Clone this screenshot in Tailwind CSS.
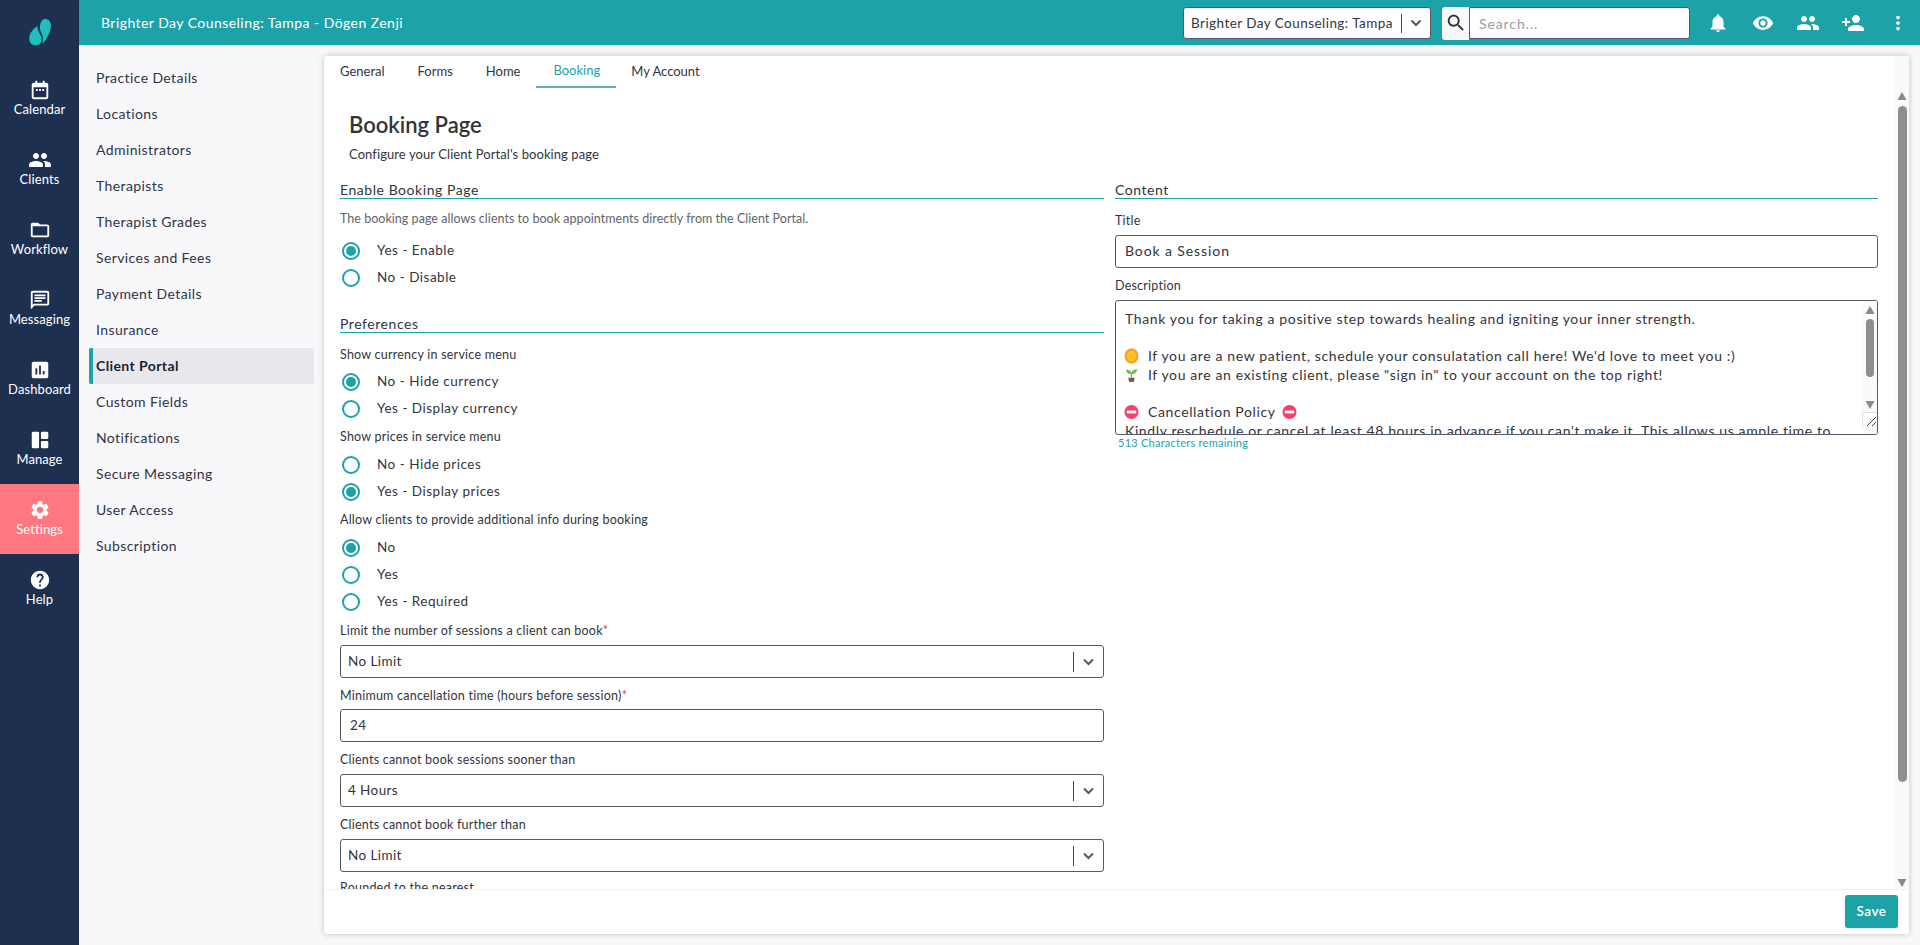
<!DOCTYPE html>
<html lang="en">
<head>
<meta charset="UTF-8" />
<meta name="viewport" content="width=device-width, initial-scale=1.0">
<title>Booking Page</title>
<script src="https://cdn.jsdelivr.net/npm/@tailwindcss/browser@4"></script>
</head>
<body class="h-[945px] w-[1920px] overflow-hidden bg-[#f8f8fb] font-[Lato,sans-serif] text-[#33343c] flex">

<!-- Main nav -->
<nav class="w-[79px] h-full bg-[#1e3050] text-white flex flex-col shrink-0">
  <div class="h-[64px] flex items-center justify-center">
    <svg class="w-[24px] h-[28px]" viewBox="0 0 24 28" fill="#1fbfbf"><path d="M16.500 1C20.500.5 23.500 4 22.800 9C22 15 18.500 22 14.500 26C15.500 21 14.800 17 13 14C11 10.500 11.500 2 16.500 1Z"/><path d="M9.500 8C9 11 10.500 13.500 12 16C14 19.500 14 23 12.500 25C11 27.500 8 27.500 6.500 27.300C2.500 27 .5 22.500 1.500 18C2.500 14 5.500 10.500 9.500 8Z"/></svg>
  </div>
  <a class="h-[70px] flex flex-col items-center pt-[14px]">
    <svg class="w-[22px] h-6" viewBox="0 0 24 24" fill="white"><path d="M7 2h2v2h6V2h2v2h2a2 2 0 0 1 2 2v14a2 2 0 0 1-2 2H5a2 2 0 0 1-2-2V6a2 2 0 0 1 2-2h2V2zM5 9v11h14V9H5z"/><path d="M7.500 11h2v2h-2zM11 11h2v2h-2zM14.500 11h2v2h-2z"/></svg>
    <span class="text-[13px] leading-[18px] -mt-[2px] tracking-[0.1px]">Calendar</span>
  </a>
  <a class="h-[70px] flex flex-col items-center pt-[14px]">
    <svg class="w-6 h-6" viewBox="0 0 24 24" fill="white"><path d="M16 11c1.66 0 2.99-1.34 2.99-3S17.66 5 16 5c-1.66 0-3 1.34-3 3s1.34 3 3 3zm-8 0c1.66 0 2.99-1.34 2.99-3S9.66 5 8 5C6.34 5 5 6.34 5 8s1.34 3 3 3zm0 2c-2.33 0-7 1.17-7 3.5V19h14v-2.5c0-2.33-4.67-3.5-7-3.5zm8 0c-.29 0-.62.02-.97.05 1.16.84 1.97 1.97 1.97 3.45V19h6v-2.5c0-2.33-4.67-3.5-7-3.5z"/></svg>
    <span class="text-[13px] leading-[18px] -mt-[2px] tracking-[0.1px]">Clients</span>
  </a>
  <a class="h-[70px] flex flex-col items-center pt-[14px]">
    <svg class="w-[22px] h-6" viewBox="0 0 24 24" fill="white"><path d="M20 6h-8l-2-2H4c-1.1 0-1.99.9-1.99 2L2 18c0 1.1.9 2 2 2h16c1.1 0 2-.9 2-2V8c0-1.1-.9-2-2-2zm0 12H4V8h16v10z"/></svg>
    <span class="text-[13px] leading-[18px] -mt-[2px] tracking-[0.1px]">Workflow</span>
  </a>
  <a class="h-[70px] flex flex-col items-center pt-[14px]">
    <svg class="w-[22px] h-6" viewBox="0 0 24 24" fill="white"><path d="M20 2H4c-1.1 0-1.99.9-1.99 2L2 22l4-4h14c1.1 0 2-.9 2-2V4c0-1.1-.9-2-2-2zm0 14H5.17L4 17.17V4h16v12zM6 12h8v2H6zm0-3h12v2H6zm0-3h12v2H6z"/></svg>
    <span class="text-[13px] leading-[18px] -mt-[2px] tracking-[0.1px]">Messaging</span>
  </a>
  <a class="h-[70px] flex flex-col items-center pt-[14px]">
    <svg class="w-[22px] h-6" viewBox="0 0 24 24" fill="white"><path d="M19 3H5c-1.1 0-2 .9-2 2v14c0 1.1.9 2 2 2h14c1.1 0 2-.9 2-2V5c0-1.1-.9-2-2-2zM9 17H7v-7h2v7zm4 0h-2V7h2v10zm4 0h-2v-4h2v4z"/></svg>
    <span class="text-[13px] leading-[18px] -mt-[2px] tracking-[0.1px]">Dashboard</span>
  </a>
  <a class="h-[70px] flex flex-col items-center pt-[14px]">
    <svg class="w-[22px] h-6" viewBox="0 0 24 24" fill="white"><rect x="3" y="3" width="8" height="18" rx="1.5"/><rect x="13" y="3" width="8" height="8" rx="1.5"/><rect x="13" y="13" width="8" height="8" rx="1.5"/></svg>
    <span class="text-[13px] leading-[18px] -mt-[2px] tracking-[0.1px]">Manage</span>
  </a>
  <a class="h-[70px] flex flex-col items-center pt-[14px] bg-[#ff7880]">
    <svg class="w-[22px] h-6" viewBox="0 0 24 24" fill="white"><path d="M19.14 12.94c.04-.3.06-.61.06-.94 0-.32-.02-.64-.07-.94l2.03-1.58c.18-.14.23-.41.12-.61l-1.92-3.32c-.12-.22-.37-.29-.59-.22l-2.39.96c-.5-.38-1.03-.7-1.62-.94l-.36-2.54c-.04-.24-.24-.41-.48-.41h-3.84c-.24 0-.43.17-.47.41l-.36 2.54c-.59.24-1.13.57-1.62.94l-2.39-.96c-.22-.08-.47 0-.59.22L2.74 8.87c-.12.21-.08.47.12.61l2.03 1.58c-.05.3-.09.63-.09.94s.02.64.07.94l-2.03 1.58c-.18.14-.23.41-.12.61l1.92 3.32c.12.22.37.29.59.22l2.39-.96c.5.38 1.03.7 1.62.94l.36 2.54c.05.24.24.41.48.41h3.84c.24 0 .44-.17.47-.41l.36-2.54c.59-.24 1.13-.56 1.62-.94l2.39.96c.22.08.47 0 .59-.22l1.92-3.32c.12-.22.07-.47-.12-.61l-2.01-1.58zM12 15.6c-1.98 0-3.6-1.62-3.6-3.6s1.62-3.6 3.6-3.6 3.6 1.62 3.6 3.6-1.62 3.6-3.6 3.6z"/></svg>
    <span class="text-[13px] leading-[18px] -mt-[2px] tracking-[0.1px]">Settings</span>
  </a>
  <a class="h-[70px] flex flex-col items-center pt-[14px]">
    <svg class="w-[22px] h-6" viewBox="0 0 24 24" fill="white"><path d="M12 2C6.48 2 2 6.48 2 12s4.48 10 10 10 10-4.48 10-10S17.52 2 12 2zm1 17h-2v-2h2v2zm2.07-7.75l-.9.92C13.45 12.9 13 13.5 13 15h-2v-.5c0-1.1.45-2.1 1.17-2.83l1.24-1.26c.37-.36.59-.86.59-1.41 0-1.1-.9-2-2-2s-2 .9-2 2H8c0-2.21 1.79-4 4-4s4 1.79 4 4c0 .88-.36 1.68-.93 2.25z"/></svg>
    <span class="text-[13px] leading-[18px] -mt-[2px] tracking-[0.1px]">Help</span>
  </a>
</nav>

<div class="flex-1 flex flex-col min-w-0">
  <!-- Top bar -->
  <header class="h-[45px] bg-[#1da2a8] shadow-sm flex items-center shrink-0 pl-[22px] text-white">
    <span class="text-[14px] tracking-[0.45px] flex-1 whitespace-nowrap">Brighter Day Counseling: Tampa - Dōgen Zenji</span>
    <div class="w-[248px] h-[32px] bg-white rounded-[3px] border border-[#555a66] flex items-center text-[#33343c] text-[13.5px] pl-[7px] mt-[1px]">
      <span class="flex-1 tracking-[0.45px] whitespace-nowrap">Brighter Day Counseling: Tampa</span>
      <span class="w-px h-[19px] bg-[#44464f]"></span>
      <svg class="w-[28px] h-[16px]" viewBox="0 0 28 16" fill="none" stroke="#55585f" stroke-width="2"><path d="M9.500 5.500l4.500 4.500 4.500-4.500"/></svg>
    </div>
    <div class="w-[27px] h-[33px] bg-[#f8f8fb] rounded-l-[3px] ml-[11px] flex items-center justify-center mt-[1px]">
      <svg class="w-[22px] h-[22px]" viewBox="0 0 24 24" fill="#2d2f36"><path d="M15.5 14h-.79l-.28-.27C15.41 12.59 16 11.11 16 9.5 16 5.91 13.09 3 9.5 3S3 5.91 3 9.5 5.91 16 9.5 16c1.61 0 3.09-.59 4.23-1.57l.27.28v.79l5 4.99L20.49 19l-4.99-5zm-6 0C7.01 14 5 11.99 5 9.5S7.01 5 9.5 5 14 7.01 14 9.5 11.99 14 9.5 14z"/></svg>
    </div>
    <div class="w-[221px] h-[32px] bg-white rounded-r-[3px] border border-[#555a66] flex items-center pl-[9px] text-[14px] text-[#9a9ca3] tracking-[0.9px] mt-[1px]">Search...</div>
    <div class="flex items-center ml-[5px] shrink-0">
      <span class="w-[45px] flex justify-center"><svg class="w-[22px] h-[22px]" viewBox="0 0 24 24" fill="white"><path d="M12 22c1.1 0 2-.9 2-2h-4c0 1.1.89 2 2 2zm6-6v-5c0-3.07-1.64-5.64-4.5-6.32V4c0-.83-.67-1.5-1.5-1.5s-1.5.67-1.5 1.5v.68C7.63 5.36 6 7.92 6 11v5l-2 2v1h16v-1l-2-2z"/></svg></span>
      <span class="w-[45px] flex justify-center"><svg class="w-[22px] h-[22px]" viewBox="0 0 24 24" fill="white"><path d="M12 4.5C7 4.5 2.73 7.61 1 12c1.73 4.39 6 7.5 11 7.5s9.27-3.11 11-7.5c-1.73-4.39-6-7.5-11-7.5zM12 17c-2.76 0-5-2.24-5-5s2.24-5 5-5 5 2.24 5 5-2.24 5-5 5zm0-8c-1.66 0-3 1.34-3 3s1.34 3 3 3 3-1.34 3-3-1.34-3-3-3z"/></svg></span>
      <span class="w-[45px] flex justify-center"><svg class="w-[24px] h-[24px]" viewBox="0 0 24 24" fill="white"><path d="M16 11c1.66 0 2.99-1.34 2.99-3S17.66 5 16 5c-1.66 0-3 1.34-3 3s1.34 3 3 3zm-8 0c1.66 0 2.99-1.34 2.99-3S9.66 5 8 5C6.34 5 5 6.34 5 8s1.34 3 3 3zm0 2c-2.33 0-7 1.17-7 3.5V19h14v-2.5c0-2.33-4.67-3.5-7-3.5zm8 0c-.29 0-.62.02-.97.05 1.16.84 1.97 1.97 1.97 3.45V19h6v-2.5c0-2.33-4.67-3.5-7-3.5z"/></svg></span>
      <span class="w-[45px] flex justify-center"><svg class="w-[24px] h-[24px]" viewBox="0 0 24 24" fill="white"><path d="M15 12c2.21 0 4-1.79 4-4s-1.79-4-4-4-4 1.79-4 4 1.79 4 4 4zm-9-2V7H4v3H1v2h3v3h2v-3h3v-2H6zm9 4c-2.67 0-8 1.34-8 4v2h16v-2c0-2.66-5.33-4-8-4z"/></svg></span>
      <span class="w-[45px] flex justify-center"><svg class="w-[22px] h-[22px]" viewBox="0 0 24 24" fill="white"><path d="M12 8c1.1 0 2-.9 2-2s-.9-2-2-2-2 .9-2 2 .9 2 2 2zm0 2c-1.1 0-2 .9-2 2s.9 2 2 2 2-.9 2-2-.9-2-2-2zm0 6c-1.1 0-2 .9-2 2s.9 2 2 2 2-.9 2-2-.9-2-2-2z"/></svg></span>
    </div>
  </header>

  <div class="flex-1 flex min-h-0">
    <!-- Settings menu -->
    <aside class="w-[245px] shrink-0 pt-[15px] pl-[10px] pr-[10px] text-[14px] tracking-[0.4px] text-[#2f3445]">
      <div class="h-9 flex items-center pl-[7px] pb-[2px]">Practice Details</div>
      <div class="h-9 flex items-center pl-[7px] pb-[2px]">Locations</div>
      <div class="h-9 flex items-center pl-[7px] pb-[2px]">Administrators</div>
      <div class="h-9 flex items-center pl-[7px] pb-[2px]">Therapists</div>
      <div class="h-9 flex items-center pl-[7px] pb-[2px]">Therapist Grades</div>
      <div class="h-9 flex items-center pl-[7px] pb-[2px]">Services and Fees</div>
      <div class="h-9 flex items-center pl-[7px] pb-[2px]">Payment Details</div>
      <div class="h-9 flex items-center pl-[7px] pb-[2px]">Insurance</div>
      <div class="h-9 flex items-center pl-[3px] pb-[2px] border-l-4 border-[#1da2a8] bg-[#e8e8ec] rounded-[2px] font-bold text-[#1e2230]">Client Portal</div>
      <div class="h-9 flex items-center pl-[7px] pb-[2px]">Custom Fields</div>
      <div class="h-9 flex items-center pl-[7px] pb-[2px]">Notifications</div>
      <div class="h-9 flex items-center pl-[7px] pb-[2px]">Secure Messaging</div>
      <div class="h-9 flex items-center pl-[7px] pb-[2px]">User Access</div>
      <div class="h-9 flex items-center pl-[7px] pb-[2px]">Subscription</div>
    </aside>

    <!-- Card -->
    <main class="w-[1585px] h-[878px] mt-[11px] bg-white rounded-[3px] shadow-[0_0_6px_rgba(0,0,0,0.22)] flex flex-col overflow-hidden">
      <div class="h-[834px] flex min-h-0 border-b border-[#f1f1f3]">
        <div class="flex-1 min-w-0 flex flex-col">
          <!-- Tabs -->
          <div class="h-[32px] shrink-0 flex text-[13px]">
            <a class="px-[16px] flex items-center pb-[1px]">General</a>
            <a class="pl-[17px] pr-[16px] flex items-center pb-[1px]">Forms</a>
            <a class="pl-[17px] pr-[16px] flex items-center pb-[1px]">Home</a>
            <a class="pl-[17px] pr-[16px] flex items-center pb-[1px] border-b-2 border-[#6aa9bb] text-[#1da2a8]">Booking</a>
            <a class="pl-[15px] pr-[16px] flex items-center pb-[1px]">My Account</a>
          </div>

          <div class="flex-1 min-h-0 overflow-hidden pl-[16px] pr-[17px]">
            <div class="pl-[9px] pt-[23px]">
              <h1 class="text-[22px] leading-[28px] font-semibold text-[#333438]">Booking Page</h1>
              <p class="text-[13px] leading-[18px] mt-[6px] tracking-[0.08px]">Configure your Client Portal's booking page</p>
            </div>

            <div class="grid grid-cols-[764px_763px] gap-x-[11px] mt-[17px]">
              <!-- Left column -->
              <div>
                <h2 class="h-[19px] text-[14px] leading-[20px] tracking-[0.55px] border-b-[1.5px] border-[#1da2a8]">Enable Booking Page</h2>
                <p class="text-[12.5px] leading-[18px] mt-[11px] text-[#62646c] tracking-[0.03px]">The booking page allows clients to book appointments directly from the Client Portal.</p>

                <div class="mt-[9px]">
                  <label class="h-[27px] flex items-center text-[13.5px] tracking-[0.5px] pl-[2px]"><span class="w-[18px] h-[18px] rounded-full border-2 border-[#1da2a8] flex items-center justify-center mr-[17px]"><span class="w-[10px] h-[10px] rounded-full bg-[#1da2a8]"></span></span>Yes - Enable</label>
                  <label class="h-[27px] flex items-center text-[13.5px] tracking-[0.5px] pl-[2px]"><span class="w-[18px] h-[18px] rounded-full border-2 border-[#1da2a8] mr-[17px]"></span>No - Disable</label>
                </div>

                <h2 class="h-[19px] text-[14px] leading-[20px] tracking-[0.55px] border-b-[1.5px] border-[#1da2a8] mt-[23px]">Preferences</h2>

                <p class="text-[12.5px] leading-[18px] mt-[13px] tracking-[0.23px]">Show currency in service menu</p>
                <div class="mt-[4px]">
                  <label class="h-[27px] flex items-center text-[13.5px] tracking-[0.5px] pl-[2px]"><span class="w-[18px] h-[18px] rounded-full border-2 border-[#1da2a8] flex items-center justify-center mr-[17px]"><span class="w-[10px] h-[10px] rounded-full bg-[#1da2a8]"></span></span>No - Hide currency</label>
                  <label class="h-[27px] flex items-center text-[13.5px] tracking-[0.5px] pl-[2px]"><span class="w-[18px] h-[18px] rounded-full border-2 border-[#1da2a8] mr-[17px]"></span>Yes - Display currency</label>
                </div>

                <p class="text-[12.5px] leading-[18px] mt-[6px] tracking-[0.23px]">Show prices in service menu</p>
                <div class="mt-[5px]">
                  <label class="h-[27px] flex items-center text-[13.5px] tracking-[0.5px] pl-[2px]"><span class="w-[18px] h-[18px] rounded-full border-2 border-[#1da2a8] mr-[17px]"></span>No - Hide prices</label>
                  <label class="h-[27px] flex items-center text-[13.5px] tracking-[0.5px] pl-[2px]"><span class="w-[18px] h-[18px] rounded-full border-2 border-[#1da2a8] flex items-center justify-center mr-[17px]"><span class="w-[10px] h-[10px] rounded-full bg-[#1da2a8]"></span></span>Yes - Display prices</label>
                </div>

                <p class="text-[12.5px] leading-[18px] mt-[6px] tracking-[0.23px]">Allow clients to provide additional info during booking</p>
                <div class="mt-[5px]">
                  <label class="h-[27px] flex items-center text-[13.5px] tracking-[0.5px] pl-[2px]"><span class="w-[18px] h-[18px] rounded-full border-2 border-[#1da2a8] flex items-center justify-center mr-[17px]"><span class="w-[10px] h-[10px] rounded-full bg-[#1da2a8]"></span></span>No</label>
                  <label class="h-[27px] flex items-center text-[13.5px] tracking-[0.5px] pl-[2px]"><span class="w-[18px] h-[18px] rounded-full border-2 border-[#1da2a8] mr-[17px]"></span>Yes</label>
                  <label class="h-[27px] flex items-center text-[13.5px] tracking-[0.5px] pl-[2px]"><span class="w-[18px] h-[18px] rounded-full border-2 border-[#1da2a8] mr-[17px]"></span>Yes - Required</label>
                </div>

                <p class="text-[12.5px] leading-[18px] mt-[7px] tracking-[0.23px]">Limit the number of sessions a client can book<span class="text-[#e04040]">*</span></p>
                <div class="mt-[5px] h-[33px] border border-[#555a66] rounded-[3px] flex items-center pl-[7px] text-[13.5px] tracking-[0.4px]">
                  <span class="flex-1 pb-[1px]">No Limit</span><span class="w-px h-[20px] bg-[#44464f]"></span>
                  <svg class="w-[29px] h-[16px]" viewBox="0 0 29 16" fill="none" stroke="#55585f" stroke-width="2"><path d="M10 5.500l4.500 4.500 4.500-4.500"/></svg>
                </div>

                <p class="text-[12.5px] leading-[18px] mt-[9px] tracking-[0.23px]">Minimum cancellation time (hours before session)<span class="text-[#e04040]">*</span></p>
                <div class="mt-[4px] h-[33px] border border-[#555a66] rounded-[3px] flex items-center pl-[9px] text-[13.5px] tracking-[0.4px]">24</div>

                <p class="text-[12.5px] leading-[18px] mt-[9px] tracking-[0.23px]">Clients cannot book sessions sooner than</p>
                <div class="mt-[5px] h-[33px] border border-[#555a66] rounded-[3px] flex items-center pl-[7px] text-[13.5px] tracking-[0.4px]">
                  <span class="flex-1">4 Hours</span><span class="w-px h-[20px] bg-[#44464f]"></span>
                  <svg class="w-[29px] h-[16px]" viewBox="0 0 29 16" fill="none" stroke="#55585f" stroke-width="2"><path d="M10 5.500l4.500 4.500 4.500-4.500"/></svg>
                </div>

                <p class="text-[12.5px] leading-[18px] mt-[9px] tracking-[0.23px]">Clients cannot book further than</p>
                <div class="mt-[5px] h-[33px] border border-[#555a66] rounded-[3px] flex items-center pl-[7px] text-[13.5px] tracking-[0.4px]">
                  <span class="flex-1">No Limit</span><span class="w-px h-[20px] bg-[#44464f]"></span>
                  <svg class="w-[29px] h-[16px]" viewBox="0 0 29 16" fill="none" stroke="#55585f" stroke-width="2"><path d="M10 5.500l4.500 4.500 4.500-4.500"/></svg>
                </div>

                <p class="text-[12.5px] leading-[18px] mt-[7px] tracking-[0.23px]">Rounded to the nearest</p>
              </div>

              <!-- Right column -->
              <div>
                <h2 class="h-[19px] text-[14px] leading-[20px] tracking-[0.55px] border-b-[1.5px] border-[#1da2a8]">Content</h2>
                <p class="text-[12.5px] leading-[18px] mt-[13px] tracking-[0.23px]">Title</p>
                <div class="mt-[5px] h-[33px] border border-[#555a66] rounded-[3px] flex items-center pl-[9px] pb-[2px] text-[14px] tracking-[0.9px]">Book a Session</div>
                <p class="text-[12.5px] leading-[18px] mt-[9px] tracking-[0.23px]">Description</p>
                <div class="mt-[5px] h-[135px] border border-[#555a66] rounded-[3px] flex overflow-hidden">
                  <div class="flex-1 min-w-0 pl-[9px] pt-[9px] text-[14px] leading-[18.6px] tracking-[0.62px] whitespace-nowrap">
                    <div>Thank you for taking a positive step towards healing and igniting your inner strength.</div>
                    <div class="h-[18.6px]"></div>
                    <div class="flex items-center"><svg class="w-[15px] h-[16px] mr-[9px] -ml-[1px]" viewBox="0 0 15 16"><ellipse cx="7.500" cy="8" rx="7" ry="7.800" fill="#f5a623"/><ellipse cx="7.500" cy="8" rx="4.500" ry="5.500" fill="#fbc02d"/></svg>If you are a new patient, schedule your consulatation call here! We'd love to meet you :)</div>
                    <div class="flex items-center"><svg class="w-[15px] h-[16px] mr-[9px] -ml-[1px]" viewBox="0 0 16 16"><path fill="#7b5b4e" d="M4.500 11h7l-1 4.500h-5z"/><path fill="#6cbf3b" d="M7.300 11V7C5 7 2.600 5.600 2 2.500 4.800 2.200 7 3.400 8 5.500 9 3.200 11 1.800 14 2c-.4 3-2.500 4.800-5.300 5v4z"/></svg>If you are an existing client, please "sign in" to your account on the top right!</div>
                    <div class="h-[18.6px]"></div>
                    <div class="flex items-center"><svg class="w-[15px] h-[16px] mr-[9px] -ml-[1px]" viewBox="0 0 16 16"><circle cx="8" cy="8" r="7.500" fill="#f5416c"/><rect x="3" y="6.500" width="10" height="3" fill="white"/></svg>Cancellation Policy<svg class="w-[15px] h-[16px] ml-[6px]" viewBox="0 0 16 16"><circle cx="8" cy="8" r="7.500" fill="#f5416c"/><rect x="3" y="6.500" width="10" height="3" fill="white"/></svg></div>
                    <div>Kindly reschedule or cancel at least 48 hours in advance if you can't make it. This allows us ample time to</div>
                  </div>
                  <div class="w-[15px] bg-[#fafafa] flex flex-col items-center">
                    <svg class="w-[10px] h-[8px] mt-[5px]" viewBox="0 0 10 8" fill="#8a8a8a"><path d="M5 0l4.500 8H.5z"/></svg>
                    <div class="w-[8px] h-[58px] rounded-full bg-[#8f8f8f] mt-[5px]"></div>
                    <svg class="w-[10px] h-[8px] mt-[24px]" viewBox="0 0 10 8" fill="#8a8a8a"><path d="M5 8L.5 0h9z"/></svg>
                    <div class="w-[15px] h-[15px] bg-white border-l border-t border-[#e2e2e2] flex items-end justify-end mt-[3px]"><svg class="w-[11px] h-[11px]" viewBox="0 0 11 11" stroke="#444" fill="none"><path d="M1 10L10 1M6 10l4-4"/></svg></div>
                  </div>
                </div>
                <p class="mt-[1px] pl-[3px] text-[11px] leading-[14px] tracking-[0.25px] text-[#1da2a8]">513 Characters remaining</p>
              </div>
            </div>
          </div>
        </div>

        <!-- Page scrollbar -->
        <div class="w-[14px] shrink-0 bg-[#fafafa] flex flex-col items-center pt-[36px]">
          <svg class="w-[10px] h-[8px]" viewBox="0 0 10 8" fill="#8a8a8a"><path d="M5 0l4.500 8H.5z"/></svg>
          <div class="w-[9px] h-[676px] rounded-full bg-[#8f8f8f] mt-[6px]"></div>
          <svg class="w-[10px] h-[8px] mt-[97px]" viewBox="0 0 10 8" fill="#8a8a8a"><path d="M5 8L.5 0h9z"/></svg>
        </div>
      </div>

      <!-- Footer -->
      <div class="flex-1 flex justify-end items-start pt-[5px] pr-[11px]">
        <button class="w-[53px] h-[33px] bg-[#1da2a8] text-white text-[13.5px] font-semibold tracking-[0.5px] rounded-[3px] shadow-sm">Save</button>
      </div>
    </main>
  </div>
</div>
</body>
</html>
